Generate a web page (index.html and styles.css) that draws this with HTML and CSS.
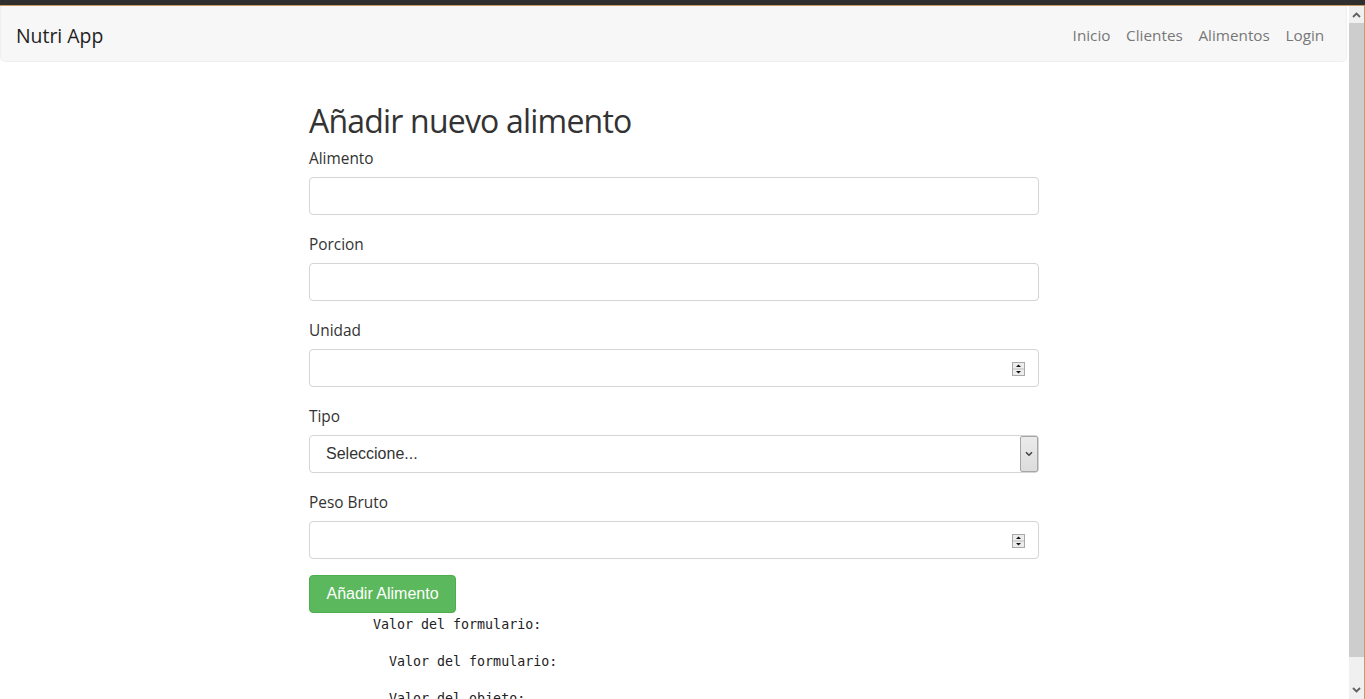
FILE: index.html
```html
<!DOCTYPE html>
<html lang="es">
<head>
<meta charset="utf-8">
<title>Nutri App</title>
<link rel="stylesheet" href="styles.css">
</head>
<body>
<div class="frame">
  <div class="titlebar"></div>
  <div class="window">
    <div class="viewport">
      <nav class="navbar">
        <a class="brand" href="#">Nutri App</a>
        <ul class="nav-links">
          <li><a href="#">Inicio</a></li>
          <li><a href="#">Clientes</a></li>
          <li><a href="#">Alimentos</a></li>
          <li><a href="#">Login</a></li>
        </ul>
      </nav>
      <main class="container">
        <h1 class="title">Añadir nuevo alimento</h1>
        <form class="form">
          <div class="form-group">
            <label class="label">Alimento</label>
            <div class="field"><input class="input" type="text"></div>
          </div>
          <div class="form-group">
            <label class="label">Porcion</label>
            <div class="field"><input class="input" type="text"></div>
          </div>
          <div class="form-group">
            <label class="label">Unidad</label>
            <div class="field">
              <input class="input" type="text">
              <span class="spinner">
                <svg width="13" height="14" viewBox="0 0 13 14"><rect x="0.5" y="0.5" width="12" height="13" fill="#ececec" stroke="#a8a8a8"/><line x1="1" y1="7" x2="12" y2="7" stroke="#bdbdbd"/><path d="M4 5 L6.5 2.5 L9 5 Z" fill="#111"/><path d="M4 9 L9 9 L6.5 11.5 Z" fill="#111"/></svg>
              </span>
            </div>
          </div>
          <div class="form-group">
            <label class="label">Tipo</label>
            <div class="select">
              <span class="select-text">Seleccione...</span>
              <span class="select-btn">
                <svg width="8" height="6" viewBox="0 0 8 6"><path d="M1 1.2 L4 4.2 L7 1.2" fill="none" stroke="#444" stroke-width="1.6"/></svg>
              </span>
            </div>
          </div>
          <div class="form-group last">
            <label class="label">Peso Bruto</label>
            <div class="field">
              <input class="input" type="text">
              <span class="spinner">
                <svg width="13" height="14" viewBox="0 0 13 14"><rect x="0.5" y="0.5" width="12" height="13" fill="#ececec" stroke="#a8a8a8"/><line x1="1" y1="7" x2="12" y2="7" stroke="#bdbdbd"/><path d="M4 5 L6.5 2.5 L9 5 Z" fill="#111"/><path d="M4 9 L9 9 L6.5 11.5 Z" fill="#111"/></svg>
              </span>
            </div>
          </div>
          <button class="btn" type="button">Añadir Alimento</button>
        </form>
<pre class="debug">        Valor del formulario:

          Valor del formulario:

          Valor del objeto:</pre>
      </main>
    </div>
    <div class="scrollbar">
      <div class="sb-arrow sb-up">
        <svg width="9" height="6" viewBox="0 0 9 6"><path d="M1 5 L4.5 1.5 L8 5" fill="none" stroke="#606060" stroke-width="1.8"/></svg>
      </div>
      <div class="sb-thumb"></div>
      <div class="sb-arrow sb-down">
        <svg width="9" height="6" viewBox="0 0 9 6"><path d="M1 1 L4.5 4.5 L8 1" fill="none" stroke="#606060" stroke-width="1.8"/></svg>
      </div>
    </div>
    <div class="edge"></div>
  </div>
</div>
</body>
</html>
```
FILE: styles.css
```css
* { box-sizing: border-box; }
html, body {
  margin: 0;
  padding: 0;
  height: 699px;
  overflow: hidden;
  background: #fff;
}
body {
  font-family: "Open Sans", "Noto Sans", sans-serif;
  color: #333;
}
.frame {
  display: flex;
  flex-direction: column;
  height: 699px;
}
.titlebar {
  height: 6px;
  background: #2f2f2f;
  border-bottom: 1px solid #c99a5e;
  flex: none;
}
.window {
  flex: 1;
  display: flex;
  min-height: 0;
}
.viewport {
  flex: 1;
  min-width: 0;
  overflow: hidden;
}
.navbar {
  height: 56px;
  margin-right: 2px;
  background: #f7f7f7;
  border: 1px solid #efefef;
  border-top: none;
  border-radius: 0 0 5px 5px;
  display: flex;
  align-items: center;
  justify-content: space-between;
  padding: 3px 14px 0 15px;
}
.brand {
  font-size: 19.4px;
  color: #222;
  text-decoration: none;
}
.nav-links {
  list-style: none;
  margin: 0;
  padding: 0;
  display: flex;
}
.nav-links a {
  display: block;
  padding: 0 7.8px;
  font-size: 15.3px;
  color: #777;
  text-decoration: none;
}
.container {
  width: 731px;
  padding-right: 1px;
  margin: 0 auto;
}
.title {
  font-size: 32px;
  letter-spacing: -0.8px;
  font-weight: 400;
  line-height: 40px;
  margin: 39px 0 6px;
}
.form-group { margin-bottom: 18px; }
.form-group.last { margin-bottom: 16px; }
.label {
  display: block;
  font-size: 15.4px;
  line-height: 22px;
  margin: 0 0 7px;
  padding-top: 1px;
}
.field {
  height: 38px;
  border: 1px solid #d4d4d4;
  border-radius: 4px;
  display: flex;
  align-items: center;
  padding-right: 13px;
  background: #fff;
}
.input {
  flex: 1;
  min-width: 0;
  height: 100%;
  border: none;
  outline: none;
  background: transparent;
  padding: 0 12px;
  font: inherit;
}
.spinner {
  display: flex;
  margin-top: 1px;
}
.select {
  height: 38px;
  border: 1px solid #d4d4d4;
  border-radius: 4px;
  display: flex;
  align-items: stretch;
  background: #fff;
}
.select-text {
  flex: 1;
  display: flex;
  align-items: center;
  padding-left: 16px;
  font-family: "Liberation Sans", Arial, sans-serif;
  font-size: 16px;
  color: #333;
}
.select-btn {
  width: 18px;
  background: linear-gradient(#ebebeb, #dcdcdc);
  border: 1px solid #a6a6a6;
  border-radius: 2px;
  display: flex;
  align-items: center;
  justify-content: center;
}
.btn {
  display: block;
  height: 38px;
  padding: 0 16.5px;
  background: #5cb85c;
  border: 1px solid #4cae4c;
  border-radius: 4px;
  color: #fff;
  font-family: "Liberation Sans", Arial, sans-serif;
  font-size: 16px;
  margin: 0;
}
.debug {
  font-family: "DejaVu Sans Mono", "Liberation Mono", monospace;
  font-size: 13.3px;
  line-height: 18.5px;
  margin: 3px 0 0;
  color: #222;
}
.scrollbar {
  width: 15px;
  flex: none;
  display: flex;
  flex-direction: column;
  background: #f0f0f0;
}
.sb-arrow {
  display: flex;
  justify-content: center;
  background: #f0f0f0;
}
.sb-up {
  height: 17px;
  align-items: center;
}
.sb-thumb {
  flex: 1;
  background: #cdcdcd;
}
.sb-down {
  height: 42px;
  align-items: flex-end;
  padding-bottom: 6px;
}
.edge {
  width: 1px;
  flex: none;
  background: #c99a5e;
}
```
